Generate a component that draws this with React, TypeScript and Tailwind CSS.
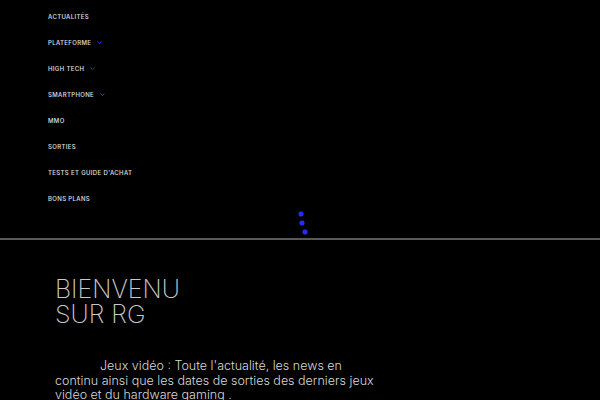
const navItems: { label: string; sub?: boolean }[] = [
  { label: "Actualités" },
  { label: "Plateforme", sub: true },
  { label: "High Tech", sub: true },
  { label: "Smartphone", sub: true },
  { label: "MMO" },
  { label: "Sorties" },
  { label: "Tests et guide d'achat" },
  { label: "Bons plans" },
];

function Caret() {
  return (
    <svg width="5" height="3" viewBox="0 0 5 3" className="ml-[6px]">
      <path d="M0.5 0.5 L2.5 2.5 L4.5 0.5" fill="none" stroke="#3030d0" strokeWidth="1" />
    </svg>
  );
}

export default function App() {
  return (
    <div className="w-[600px] h-[400px] overflow-hidden bg-black text-white font-['Inter','Noto_Sans',sans-serif]">
      {/* Menu */}
      <nav className="pt-[3px] pl-[48px]">
        <ul>
          {navItems.map((item) => (
            <li key={item.label} className="h-[26px] flex items-center">
              <a className="text-[6px] font-medium uppercase tracking-[0.06em] text-[#e0e0e0]">
                {item.label}
              </a>
              {item.sub && <Caret />}
            </li>
          ))}
        </ul>
      </nav>

      {/* Loader dots */}
      <div className="flex justify-center h-[27px] pl-[8px]">
        <svg width="12" height="26" viewBox="0 0 12 26">
          <rect x="0.5" y="0.5" width="5" height="5" rx="2" fill="#2a2aff" />
          <rect x="1.5" y="9.5" width="5" height="5" rx="2" fill="#2a2aff" />
          <rect x="4.5" y="18.5" width="5" height="5" rx="2" fill="#2a2aff" />
        </svg>
      </div>

      <div className="h-[2px] bg-[#5a5a5a]" />

      {/* Hero */}
      <section className="pl-[55px] pt-[37px]">
        <h1 className="text-[25px] leading-[25px] font-extralight text-[#c8c8c8] uppercase">
          Bienvenu
          <br />
          Sur RG
        </h1>
        <p className="mt-[32px] w-[330px] text-[12.5px] leading-[14.5px] font-light text-[#d8d8d8] indent-[45px]">
          Jeux vidéo : Toute l'actualité, les news en continu ainsi que les dates de sorties des derniers jeux vidéo et du hardware gaming .
        </p>
      </section>
    </div>
  );
}
